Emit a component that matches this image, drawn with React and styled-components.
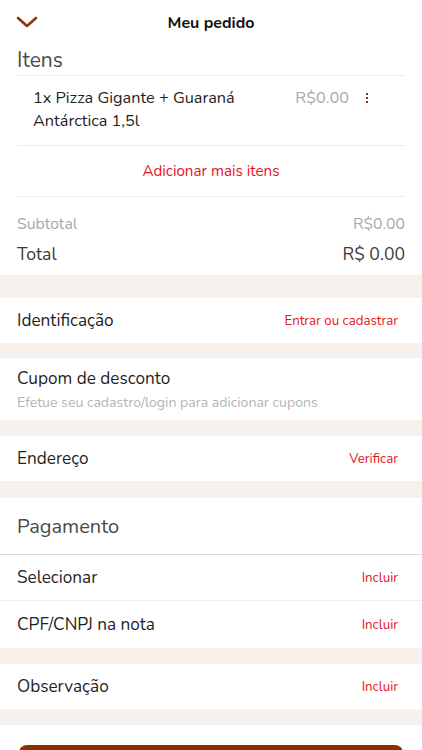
import React from 'react';
import styled, { createGlobalStyle } from 'styled-components';

const GlobalStyle = createGlobalStyle`
  body {
    margin: 0;
    background: #fff;
    font-family: 'Nunito', 'Lato', 'Open Sans', sans-serif;
    color: #1f1f1f;
  }
`;

const Page = styled.div`
  width: 422px;
  height: 750px;
  overflow: hidden;
  background: #fff;
`;

const Header = styled.header`
  position: relative;
  height: 45px;
  display: flex;
  align-items: center;
  justify-content: center;
`;

const BackButton = styled.button`
  position: absolute;
  left: 15px;
  top: 14px;
  border: 0;
  padding: 0;
  background: none;
  display: flex;
`;

const Title = styled.h1`
  margin: 0;
  font-size: 16px;
  font-weight: 700;
  color: #111;
`;

const Section = styled.section`
  background: #fff;
  padding: 0 17px;
`;

const SectionTitle = styled.h2`
  margin: 0;
  font-size: 21px;
  font-weight: 400;
  color: #4a4a4a;
  line-height: 30px;
`;

const Divider = styled.div`
  height: 1px;
  background: #ececec;
`;

const ItemRow = styled.div`
  display: flex;
  align-items: flex-start;
  padding: 11px 0 12px 16px;
`;

const ItemName = styled.div`
  flex: 1;
  font-size: 16.3px;
  line-height: 23px;
  color: #1f1f1f;
`;

const ItemPrice = styled.div`
  font-size: 16.3px;
  line-height: 23px;
  color: #a8a8a8;
  margin-right: 17px;
`;

const Dots = styled.span`
  display: flex;
  flex-direction: column;
  gap: 2px;
  padding-top: 6px;
  margin-right: 37px;
  & > i {
    width: 2px;
    height: 2px;
    background: #8b3510;
  }
`;

const AddMore = styled.button`
  display: block;
  width: 100%;
  border: 0;
  padding: 0;
  background: none;
  font: inherit;
  font-size: 15.2px;
  color: #e5141d;
  height: 50px;
`;

const Sums = styled.div`
  padding: 14px 0 4px;
`;

const SumRow = styled.div`
  display: flex;
  justify-content: space-between;
  align-items: center;
  font-size: ${(p) => (p.$big ? '17.6px' : '15.8px')};
  color: ${(p) => (p.$big ? '#3a3a3a' : '#a8a8a8')};
  height: ${(p) => (p.$big ? '34px' : '26px')};
`;

const Band = styled.div`
  height: ${(p) => p.$h}px;
  background: #f6f1ed;
`;

const Row = styled.div`
  box-sizing: border-box;
  display: flex;
  align-items: center;
  justify-content: space-between;
  height: ${(p) => p.$h || 45}px;
  padding: 0 24px 0 17px;
  border-bottom: ${(p) => p.$border || 'none'};
`;

const Label = styled.span`
  font-size: 17.2px;
  color: #1f1f1f;
`;

const Action = styled.span`
  font-size: 13.3px;
  color: #e5141d;
`;

const Stack = styled.div`
  display: flex;
  flex-direction: column;
  gap: 3px;
`;

const Hint = styled.span`
  font-size: 14.1px;
  color: #b4b4b4;
`;

const PayTitle = styled.span`
  font-size: 20px;
  color: #4a4a4a;
`;

const Footer = styled.div`
  padding: 20px 19px 0;
`;

const Submit = styled.button`
  width: 100%;
  height: 44px;
  border: 0;
  border-radius: 8px;
  background: #8a2e06;
`;

const Chevron = () => (
  <svg width="24" height="16" viewBox="0 0 24 16">
    <path d="M3 4l9 8 9-8" fill="none" stroke="#8b3510" strokeWidth="2.6" strokeLinecap="round" strokeLinejoin="round" />
  </svg>
);

export default function App() {
  return (
    <Page>
      <GlobalStyle />
      <Header>
        <BackButton aria-label="Fechar">
          <Chevron />
        </BackButton>
        <Title>Meu pedido</Title>
      </Header>

      <Section>
        <SectionTitle>Itens</SectionTitle>
        <Divider />
        <ItemRow>
          <ItemName>
            1x Pizza Gigante + Guaraná
            <br />
            Antárctica 1,5l
          </ItemName>
          <ItemPrice>R$0.00</ItemPrice>
          <Dots>
            <i />
            <i />
            <i />
          </Dots>
        </ItemRow>
        <Divider />
        <AddMore>Adicionar mais itens</AddMore>
        <Divider />
        <Sums>
          <SumRow>
            <span>Subtotal</span>
            <span>R$0.00</span>
          </SumRow>
          <SumRow $big>
            <span>Total</span>
            <span>R$ 0.00</span>
          </SumRow>
        </Sums>
      </Section>

      <Band $h={23} />
      <Row>
        <Label>Identificação</Label>
        <Action>Entrar ou cadastrar</Action>
      </Row>
      <Band $h={15} />
      <Row $h={62}>
        <Stack>
          <Label>Cupom de desconto</Label>
          <Hint>Efetue seu cadastro/login para adicionar cupons</Hint>
        </Stack>
      </Row>
      <Band $h={16} />
      <Row>
        <Label>Endereço</Label>
        <Action>Verificar</Action>
      </Row>
      <Band $h={17} />
      <Row $h={57} $border="1px solid #d8d8d8">
        <PayTitle>Pagamento</PayTitle>
      </Row>
      <Row $h={46} $border="1px solid #eeeeee">
        <Label>Selecionar</Label>
        <Action>Incluir</Action>
      </Row>
      <Row $h={47}>
        <Label>CPF/CNPJ na nota</Label>
        <Action>Incluir</Action>
      </Row>
      <Band $h={16} />
      <Row>
        <Label>Observação</Label>
        <Action>Incluir</Action>
      </Row>
      <Band $h={16} />
      <Footer>
        <Submit />
      </Footer>
    </Page>
  );
}
